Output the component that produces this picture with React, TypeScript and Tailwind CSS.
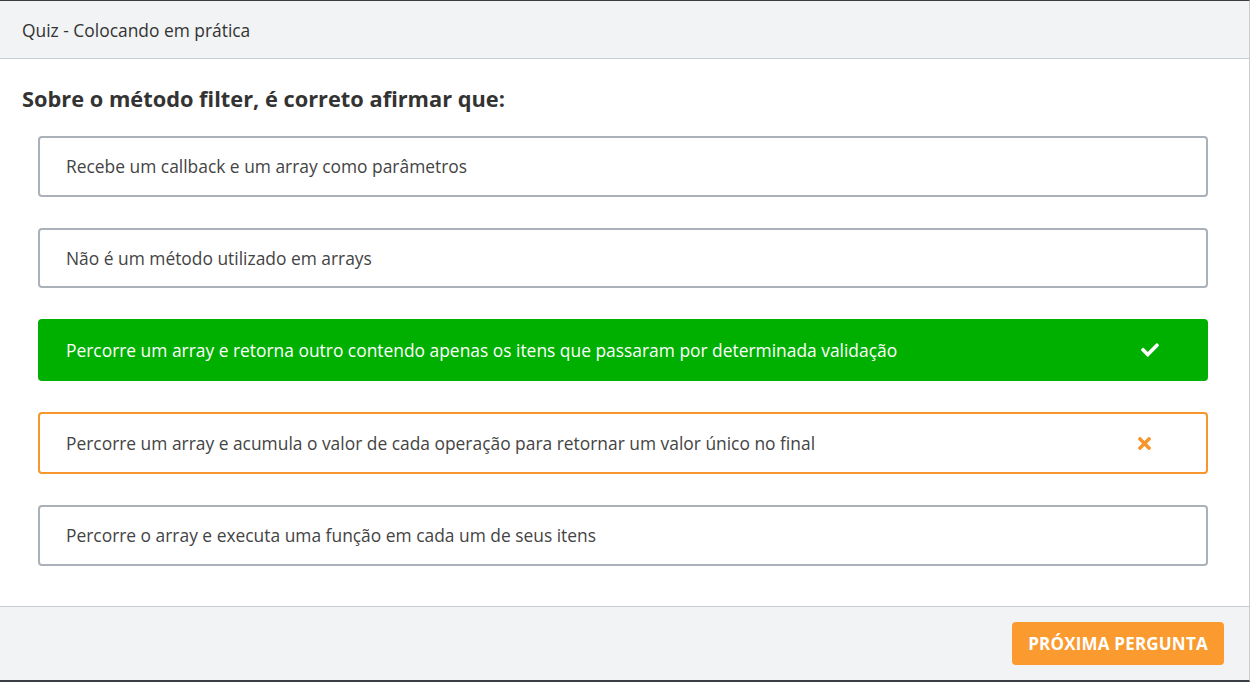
import { FaCheck, FaTimes } from 'react-icons/fa';

const OPTIONS = [
  { text: 'Recebe um callback e um array como parâmetros', state: 'idle', h: 'h-[61px]' },
  { text: 'Não é um método utilizado em arrays', state: 'idle', h: 'h-[60px]' },
  { text: 'Percorre um array e retorna outro contendo apenas os itens que passaram por determinada validação', state: 'correct', h: 'h-[62px]' },
  { text: 'Percorre um array e acumula o valor de cada operação para retornar um valor único no final', state: 'wrong', h: 'h-[62px]' },
  { text: 'Percorre o array e executa uma função em cada um de seus itens', state: 'idle', h: 'h-[61px]' },
];

export default function App() {
  return (
    <div className="w-[1251px] h-[682px] bg-white" style={{ fontFamily: '"Open Sans", sans-serif' }}>
      <div className="w-[1250px] h-[682px] flex flex-col border-t border-b-2 border-r border-t-[#3a3d42] border-b-[#3a3d42] border-r-[#c8ccd2]">
        {/* Header */}
        <div className="h-[58px] shrink-0 bg-[#f2f3f5] border-b border-[#c8ccd2] flex items-center px-[22px] pt-[2px]">
          <span className="text-[17.4px] text-[#333]">Quiz - Colocando em prática</span>
        </div>

        {/* Body */}
        <div className="flex-1 bg-white">
          <h2 className="pl-[22px] pt-[25px] text-[21.8px] font-bold text-[#333] leading-[30px]">
            Sobre o método filter, é correto afirmar que:
          </h2>
          <div className="pl-[38px] pr-[41px] pt-[22px] flex flex-col gap-[31px]">
            {OPTIONS.map((o) => (
              <OptionRow key={o.text} text={o.text} state={o.state} h={o.h} />
            ))}
          </div>
        </div>

        {/* Footer */}
        <div className="h-[74px] shrink-0 bg-[#f2f3f5] border-t border-[#c8ccd2] flex items-center justify-end pr-[25px]">
          <button className="h-[43px] w-[212px] rounded bg-[#fb9a2f] text-white font-bold text-[17px] tracking-[0.2px]">
            PRÓXIMA PERGUNTA
          </button>
        </div>
      </div>
    </div>
  );
}

function OptionRow({ text, state, h }: { text: string; state: string; h: string }) {
  if (state === 'correct') {
    return (
      <div className={`${h} rounded bg-[#00b000] flex items-center pl-[28px] pr-[49px]`}>
        <span className="flex-1 text-[17.4px] font-medium text-white">{text}</span>
        <FaCheck className="text-white text-[18px]" />
      </div>
    );
  }
  if (state === 'wrong') {
    return (
      <div className={`${h} rounded border-2 border-[#f7962c] flex items-center pl-[26px] pr-[52px]`}>
        <span className="flex-1 text-[17.4px] text-[#444]">{text}</span>
        <FaTimes className="text-[#f7962c] text-[19px]" />
      </div>
    );
  }
  return (
    <div className={`${h} rounded border-2 border-[#aab1b8] flex items-center pl-[26px]`}>
      <span className="text-[17.4px] text-[#444]">{text}</span>
    </div>
  );
}
